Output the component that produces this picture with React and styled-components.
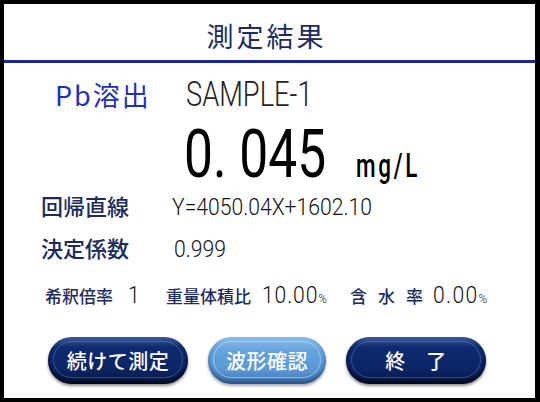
import React from 'react';
import styled, { createGlobalStyle } from 'styled-components';

const GlobalStyle = createGlobalStyle`
  html, body {
    margin: 0;
    padding: 0;
    background: #ffffff;
  }
`;

const JP = `"Noto Sans CJK JP", "Noto Sans", sans-serif`;
const NUM = `Roboto, "Noto Sans", sans-serif`;

const Frame = styled.div`
  width: 540px;
  height: 402px;
  box-sizing: border-box;
  border: 4px solid #000;
  border-right-width: 5px;
  background: #fff;
  display: flex;
  flex-direction: column;
  font-family: ${JP};
`;

const Header = styled.div`
  height: 59px;
  box-sizing: border-box;
  padding-top: 7px;
  padding-right: 6px;
  border-bottom: 3px solid #1b2690;
  display: flex;
  align-items: center;
  justify-content: center;
  font-size: 27px;
  letter-spacing: 3px;
  color: #1c2b5e;
`;

const Body = styled.div`
  flex: 1;
  display: flex;
  flex-direction: column;
  padding: 12px 0 0 0;
`;

const SampleRow = styled.div`
  display: flex;
  align-items: baseline;
  padding-left: 51px;
  height: 34px;
`;

const Analyte = styled.span`
  width: 131px;
  font-size: 27px;
  color: #2231b4;
  letter-spacing: 2px;
`;

/* condensed text: scaled horizontally, with a fixed box so flow stays known */
const Narrow = styled.span`
  display: inline-block;
  width: ${p => p.$w}px;
  white-space: nowrap;
  line-height: 1;
  font-family: ${NUM};
  font-size: ${p => p.$size}px;
  font-weight: ${p => p.$weight || 400};
  letter-spacing: ${p => p.$ls || 0}px;
  color: ${p => p.$color || '#111'};
  transform: scaleX(${p => p.$sx});
  transform-origin: left center;
`;

const ValueRow = styled.div`
  display: flex;
  align-items: baseline;
  padding-left: 180px;
  height: 67px;
  margin-top: 13px;
`;

const Small = styled.span`
  font-size: 0.55em;
  letter-spacing: 0;
`;

const InfoRow = styled.div`
  display: flex;
  align-items: baseline;
  padding-left: 37px;
  height: ${p => p.$h}px;
`;

const Label = styled.span`
  width: ${p => p.$w}px;
  font-size: 22px;
  font-weight: 500;
  color: #1c2b5e;
`;

const ParamRow = styled.div`
  display: flex;
  align-items: baseline;
  padding-left: 41px;
  margin-top: 10px;
  height: 40px;
`;

const ParamLabel = styled.span`
  font-size: 17px;
  font-weight: 500;
  color: #1c2b5e;
  letter-spacing: ${p => p.$ls || 0}px;
  margin-right: ${p => p.$mr || 6}px;
`;

const ButtonBar = styled.div`
  display: flex;
  align-items: center;
  padding-left: 44px;
  gap: 20px;
  margin-top: 14px;
`;

const Button = styled.button`
  position: relative;
  width: ${p => p.$w}px;
  height: 47px;
  border-radius: 23.5px;
  border: none;
  padding: 0;
  font-family: ${JP};
  font-size: 20px;
  font-weight: 500;
  color: #fff;
  letter-spacing: 0.5px;
  white-space: pre;
  background: ${p =>
    p.$light
      ? 'linear-gradient(180deg, #8dbdea 0%, #64a2dc 30%, #5b98d4 70%, #3f73ad 100%)'
      : 'linear-gradient(180deg, #3d5a98 0%, #0f2b70 22%, #0b2464 70%, #06173f 100%)'};
  box-shadow: ${p =>
    p.$light
      ? 'inset 0 -3px 4px rgba(20,50,100,0.55), 0 2px 3px rgba(0,0,0,0.35)'
      : 'inset 0 -3px 4px rgba(0,0,10,0.7), 0 2px 3px rgba(0,0,0,0.45)'};
  &::after {
    content: '';
    position: absolute;
    inset: 4px 5px 6px 5px;
    border-radius: 19px;
    border: 1px solid ${p => (p.$light ? 'rgba(200,225,250,0.55)' : 'rgba(90,120,190,0.55)')};
    pointer-events: none;
  }
`;

export default function App() {
  return (
    <>
      <GlobalStyle />
      <Frame>
        <Header>測定結果</Header>
        <Body>
          <SampleRow>
            <Analyte>Pb溶出</Analyte>
            <Narrow $w={130} $size={35} $weight={300} $sx={0.78} $color="#222">
              SAMPLE-1
            </Narrow>
          </SampleRow>
          <ValueRow>
            <Narrow $w={172} $size={66} $sx={0.78} $color="#000">
              0. 045
            </Narrow>
            <Narrow $w={80} $size={33} $weight={500} $sx={0.68} $ls={4} $color="#000">
              mg/L
            </Narrow>
          </ValueRow>
          <InfoRow $h={42}>
            <Label $w={131}>回帰直線</Label>
            <Narrow $w={220} $size={24} $weight={300} $sx={0.88} $color="#111">
              Y=4050.04X+1602.10
            </Narrow>
          </InfoRow>
          <InfoRow $h={42}>
            <Label $w={133}>決定係数</Label>
            <Narrow $w={80} $size={24} $weight={300} $sx={0.88} $color="#111">
              0.999
            </Narrow>
          </InfoRow>
          <ParamRow>
            <ParamLabel $mr={15}>希釈倍率</ParamLabel>
            <Narrow $w={38} $size={24} $weight={300} $sx={0.88} $color="#111">1</Narrow>
            <ParamLabel $mr={11}>重量体積比</ParamLabel>
            <Narrow $w={88} $size={24} $weight={300} $sx={0.88} $ls={1} $color="#111">
              10.00<Small>%</Small>
            </Narrow>
            <ParamLabel $ls={11} $mr={-1}>含水率</ParamLabel>
            <Narrow $w={70} $size={24} $weight={300} $sx={0.88} $ls={1.5} $color="#111">
              0.00<Small>%</Small>
            </Narrow>
          </ParamRow>
          <ButtonBar>
            <Button $w={140}>続けて測定</Button>
            <Button $w={118} $light>波形確認</Button>
            <Button $w={140}>{'終　了'}</Button>
          </ButtonBar>
        </Body>
      </Frame>
    </>
  );
}
